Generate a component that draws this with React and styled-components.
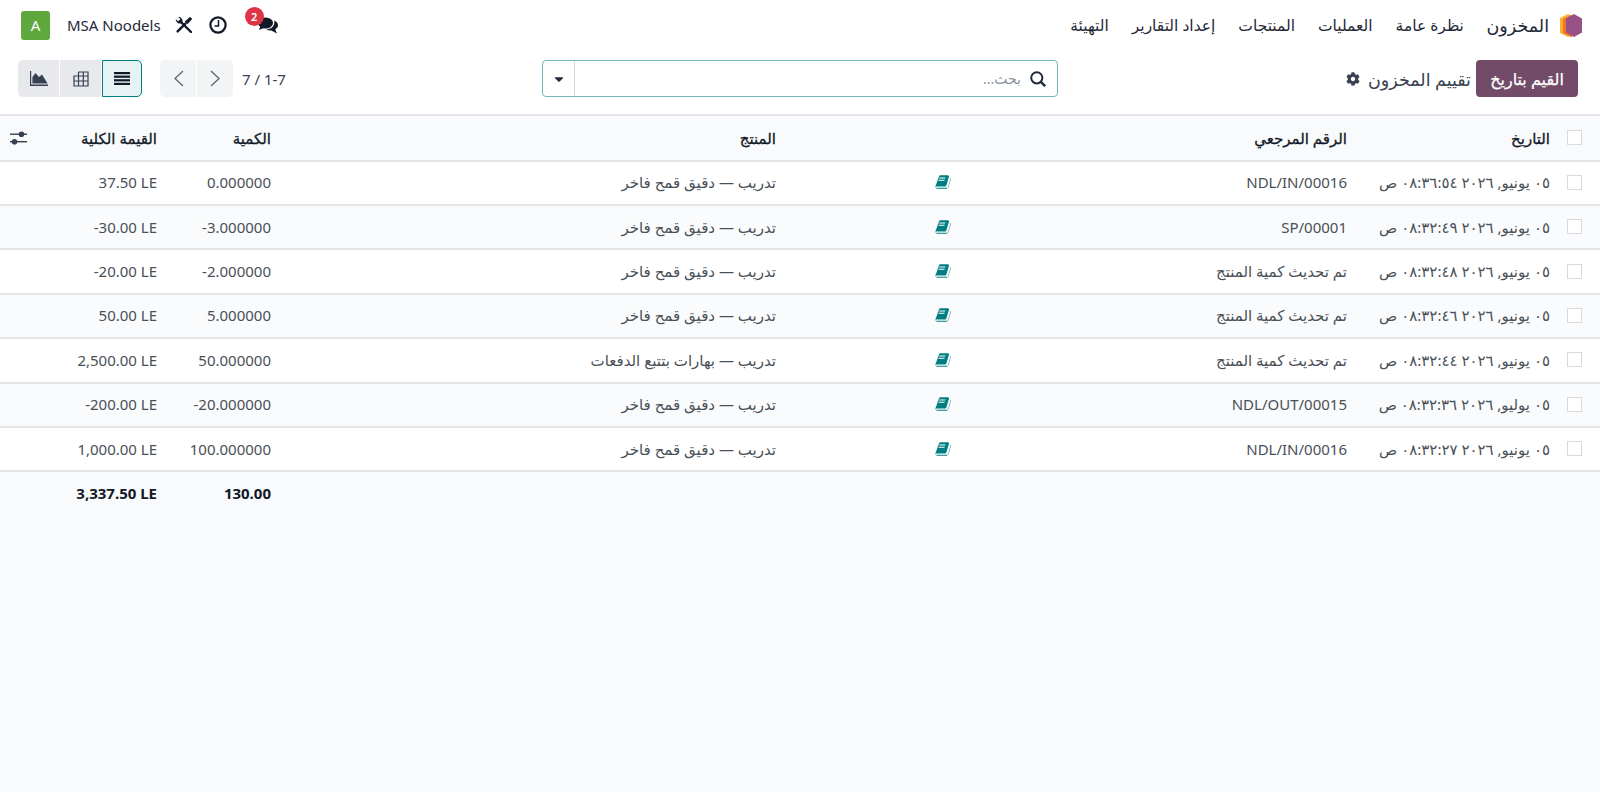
import React from 'react';
import styled, { createGlobalStyle } from 'styled-components';
import { FaCog, FaCaretDown } from 'react-icons/fa';

const Global = createGlobalStyle`
  html, body { margin: 0; padding: 0; height: 100%; background: #f9fafb; }
  #root { min-height: 792px; }
  * { box-sizing: border-box; }
`;

const Page = styled.div`
  direction: rtl;
  width: 1600px;
  height: 792px;
  overflow: hidden;
  background: #f9fafb;
  color: #374151;
  font-family: "Noto Sans", "Open Sans", "DejaVu Sans", sans-serif;
  font-size: 15px;
`;

const Top = styled.header`
  background: #fff;
  border-bottom: 2px solid #e3e5e8;
  height: 116px;
`;

const NavBar = styled.nav`
  height: 50px;
  display: flex;
  align-items: center;
  justify-content: space-between;
  padding-inline: 18px 21px;
`;

const NavGroup = styled.div`
  display: flex;
  align-items: center;
`;

const Brand = styled.span`
  font-size: 17.5px;
  color: #1f2937;
  margin-inline: 11px 11px;
`;

const MenuLink = styled.a`
  padding-inline: 11.5px;
  color: #1f2937;
  font-size: 15.5px;
`;

const SysIcon = styled.span`
  position: relative;
  display: flex;
  align-items: center;
  justify-content: ${(p) => p.$justify || 'center'};
  width: ${(p) => p.$w}px;
  margin-inline-end: ${(p) => p.$gap}px;
  color: #111827;
`;

const Badge = styled.span`
  position: absolute;
  top: -10px;
  left: 0;
  width: 19px;
  height: 19px;
  border-radius: 50%;
  background: #dc3545;
  color: #fff;
  font-size: 11px;
  font-weight: 600;
  line-height: 19px;
  text-align: center;
  direction: ltr;
`;

const Company = styled.span`
  color: #1f2937;
  font-size: 15px;
  margin-inline-end: 17px;
`;

const Avatar = styled.span`
  width: 29px;
  height: 29px;
  border-radius: 3px;
  background: #5ea83c;
  color: #fff;
  display: flex;
  align-items: center;
  justify-content: center;
  font-size: 15px;
`;

const ControlBar = styled.div`
  display: grid;
  grid-template-columns: 520px 516px 1fr;
  align-items: center;
  height: 37px;
  margin-top: 10px;
  padding-inline: 22px 18px;
`;

const Side = styled.div`
  display: flex;
  align-items: center;
`;

const EndSide = styled(Side)`
  justify-content: flex-end;
`;

const PrimaryButton = styled.button`
  height: 37px;
  width: 102px;
  padding: 0;
  border: 0;
  border-radius: 4px;
  background: #714b67;
  color: #fff;
  font: inherit;
  font-size: 16px;
  -webkit-text-stroke: 0.25px #fff;
`;

const Title = styled.span`
  font-size: 17.5px;
  color: #374151;
  margin-inline: 5px 8px;
`;

const Gear = styled.span`
  display: flex;
  font-size: 14px;
  color: #374151;
`;

const Search = styled.div`
  height: 37px;
  border: 1px solid #71b7bb;
  border-radius: 4px;
  display: flex;
  align-items: center;
  color: #1f2937;
`;

const SearchInput = styled.div`
  flex: 1;
  display: flex;
  align-items: center;
  gap: 9px;
  padding-inline-start: 11px;
`;

const Placeholder = styled.span`
  font-size: 14px;
  color: #8b929c;
`;

const CaretBox = styled.span`
  width: 32px;
  height: 100%;
  border-inline-start: 1px solid #d8dadd;
  display: flex;
  align-items: center;
  justify-content: center;
  font-size: 14px;
`;

const PagerText = styled.span`
  color: #374151;
  direction: ltr;
  margin-left: 9px;
`;

const PagerGroup = styled.div`
  display: flex;
  gap: 1px;
  height: 37px;
  border-radius: 5px;
  overflow: hidden;
  margin-inline-end: 18px;
`;

const PagerButton = styled.span`
  width: 36px;
  background: #f3f4f6;
  display: flex;
  align-items: center;
  justify-content: center;
  color: #5f6672;
`;

const ViewGroup = styled.div`
  display: flex;
  gap: 1px;
  height: 37px;
`;

const ViewButton = styled.span`
  width: ${(p) => (p.$active ? 40 : 41)}px;
  display: flex;
  align-items: center;
  justify-content: center;
  background: ${(p) => (p.$active ? '#e6f2f3' : '#e7e9ed')};
  color: ${(p) => (p.$active ? '#111827' : '#374151')};
  border: ${(p) => (p.$active ? '1px solid #017e84' : '0')};
  border-radius: ${(p) => p.$radius};
`;

const COLS = '46px 203px 371px 200px 505px 114px 125px 1fr';

const Row = styled.div`
  display: grid;
  grid-template-columns: ${COLS};
  align-items: center;
  height: ${(p) => p.$h}px;
  padding-bottom: ${(p) => p.$pb || 0}px;
  background: ${(p) => p.$bg};
  border-bottom: ${(p) => (p.$noBorder ? '0' : '2px solid #e3e5e8')};
`;

const Cell = styled.div`
  padding-inline-start: 4px;
  white-space: nowrap;
  color: #495057;
`;

const HeadCell = styled(Cell)`
  color: #111827;
  -webkit-text-stroke: 0.3px #111827;
`;

const NumberCell = styled.div`
  padding-right: 4px;
  white-space: nowrap;
  direction: ltr;
  text-align: right;
  color: ${(p) => (p.$total ? '#111827' : '#495057')};
  font-weight: ${(p) => (p.$total ? 700 : 400)};
`;

const CheckCell = styled.div`
  display: flex;
  padding-inline-start: 18px;
`;

const Check = styled.span`
  width: 15px;
  height: 15px;
  background: #fff;
  border: 1px solid #d8dadd;
  display: block;
`;

const IconCell = styled.div`
  display: flex;
  padding-inline-start: 29px;
  color: #017e84;
`;

const OptionalCell = styled.div`
  display: flex;
  justify-content: center;
  color: #374151;
`;

const data = [
  ['٠٥ يونيو, ٢٠٢٦ ٠٨:٣٦:٥٤ ص', 'NDL/IN/00016', 'تدريب — دقيق قمح فاخر', '0.000000', '37.50 LE'],
  ['٠٥ يونيو, ٢٠٢٦ ٠٨:٣٢:٤٩ ص', 'SP/00001', 'تدريب — دقيق قمح فاخر', '-3.000000', '-30.00 LE'],
  ['٠٥ يونيو, ٢٠٢٦ ٠٨:٣٢:٤٨ ص', 'تم تحديث كمية المنتج', 'تدريب — دقيق قمح فاخر', '-2.000000', '-20.00 LE'],
  ['٠٥ يونيو, ٢٠٢٦ ٠٨:٣٢:٤٦ ص', 'تم تحديث كمية المنتج', 'تدريب — دقيق قمح فاخر', '5.000000', '50.00 LE'],
  ['٠٥ يونيو, ٢٠٢٦ ٠٨:٣٢:٤٤ ص', 'تم تحديث كمية المنتج', 'تدريب — بهارات بتتبع الدفعات', '50.000000', '2,500.00 LE'],
  ['٠٥ يوليو, ٢٠٢٦ ٠٨:٣٢:٣٦ ص', 'NDL/OUT/00015', 'تدريب — دقيق قمح فاخر', '-20.000000', '-200.00 LE'],
  ['٠٥ يونيو, ٢٠٢٦ ٠٨:٣٢:٢٧ ص', 'NDL/IN/00016', 'تدريب — دقيق قمح فاخر', '100.000000', '1,000.00 LE'],
];

const Logo = () => (
  <svg width="22" height="25" viewBox="0 0 22 25">
    <path d="M8 1 L15 5 L15 20 L8 24 L0 20 L0 5 Z" fill="#fbb130" />
    <path d="M11 2 L18 6 L18 20 L11 24 L3 20 L3 6 Z" fill="#f4742b" />
    <path d="M14 1 L22 5.5 L22 19.5 L14 24 L6 19.5 L6 5.5 Z" fill="#985184" />
  </svg>
);

const ToolsIcon = () => (
  <svg width="18" height="18" viewBox="0 0 18 18" fill="none" stroke="currentColor">
    <path d="M5 5 L16 16" strokeWidth="2.4" strokeLinecap="round" />
    <path d="M1 3.6 A3.7 3.7 0 0 0 6.2 7 L7 6.2 A3.7 3.7 0 0 0 3.6 1 L5.6 3.2 L3.2 5.6 Z" fill="currentColor" strokeWidth="0.4" />
    <path d="M2.6 15.4 L10.4 7.6" strokeWidth="2.4" strokeLinecap="round" />
    <path d="M10 5.6 L15 1 L17 3 L12.4 8 Z" fill="currentColor" strokeWidth="0.4" />
  </svg>
);

const ClockIcon = () => (
  <svg width="18" height="18" viewBox="0 0 18 18" fill="none" stroke="currentColor">
    <circle cx="9" cy="9" r="7.6" strokeWidth="2.2" />
    <path d="M9.5 4 V10 H5.5" strokeWidth="1.5" />
  </svg>
);

const ChatIcon = () => (
  <svg width="20" height="17" viewBox="0 0 20 17" fill="currentColor">
    <ellipse cx="7.5" cy="6" rx="7.5" ry="5.6" />
    <path d="M2.5 9 L1 13 L7 10.5 Z" />
    <path d="M16.3 3.6 C18.6 4.7 20 6.3 20 8.2 C20 9.9 18.9 11.3 17.2 12.3 L19 16.4 L13.2 13.6 C11.4 13.6 9.6 13.1 8.2 12.4 C12.8 12.4 17 10 16.3 3.6 Z" />
  </svg>
);

const SearchIcon = () => (
  <svg width="16" height="16" viewBox="0 0 16 16" fill="none" stroke="currentColor" strokeWidth="2">
    <circle cx="6.8" cy="6.8" r="5.6" />
    <path d="M10.8 10.8 L15.2 15.2" strokeWidth="2.4" />
  </svg>
);

const BookIcon = () => (
  <svg width="16" height="16" viewBox="0 0 1792 1792" fill="currentColor">
    <path d="M1703 478q40 57 18 129l-275 906q-19 64-76.500 107.500t-122.500 43.500h-923q-77 0-148.500-53.500t-99.500-131.500q-24-67-2-127 0-4 3-27t4-37q1-8-3-21.500t-3-19.500q2-11 8-21t16.500-23.500 16.500-23.500q23-38 45-91.500t30-91.500q3-10 .5-30t-.5-28q3-11 17-28t17-23q21-36 42-92t25-90q1-9-2.500-32t.5-28q4-13 22-30.500t22-22.500q19-26 42.500-84.500t27.500-96.500q1-8-3-25.500t-2-26.500q2-8 9-18t18-23 17-21q8-12 16.500-30.500t15-35 16-36 19.500-32 26.500-23.500 36-11.500 47.500 5.500l-1 3q38-9 51-9h761q74 0 114 56t18 130l-274 906q-36 119-71.500 153.500t-128.500 34.500h-1046q-27 0-38 15-11 16-1 43 24 70 144 70h1269q29 0 56-15.500t35-41.500l300-987q7-22 5-57 38 15 59 43zm-1230 2q-4 13 2 22.500t20 9.500h608q13 0 25.500-9.500t16.500-22.500l21-64q4-13-2-22.500t-20-9.500h-608q-13 0-25.500 9.500t-16.500 22.500zm-83 256q-4 13 2 22.500t20 9.500h608q13 0 25.500-9.500t16.500-22.500l21-64q4-13-2-22.500t-20-9.500h-608q-13 0-25.500 9.500t-16.500 22.500z" />
  </svg>
);

const AreaIcon = () => (
  <svg width="18" height="15" viewBox="0 0 18 15" fill="currentColor">
    <path d="M0 0 H1.2 V13.6 H18 V15 H0 Z" />
    <path d="M2.4 12.4 V6 L5.5 2 L9 6 L12 3.6 L17.6 12.4 Z" />
  </svg>
);

const ChevronL = () => (
  <svg width="11" height="17" viewBox="0 0 11 17" fill="none" stroke="currentColor" strokeWidth="1.3">
    <path d="M10 1 L2 8.500 L10 16" />
  </svg>
);
const ChevronR = () => (
  <svg width="11" height="17" viewBox="0 0 11 17" fill="none" stroke="currentColor" strokeWidth="1.3">
    <path d="M1 1 L9 8.500 L1 16" />
  </svg>
);
const ListIcon = () => (
  <svg width="16" height="13" viewBox="0 0 16 13" fill="currentColor">
    <rect width="16" height="2.2" y="0" />
    <rect width="16" height="2.2" y="3.6" />
    <rect width="16" height="2.2" y="7.2" />
    <rect width="16" height="2.2" y="10.8" />
  </svg>
);
const PivotIcon = () => (
  <svg width="16" height="16" viewBox="0 0 16 16" fill="none" stroke="currentColor" strokeWidth="1.2">
    <path d="M5.500 1 H15 V15 H1 V5 H15 M5.500 1 V15 M10.300 1 V15 M1 10 H15" />
  </svg>
);
const SlidersIcon = () => (
  <svg width="17" height="14" viewBox="0 0 17 14" fill="currentColor">
    <rect y="2.5" width="17" height="1.4" />
    <rect y="10" width="17" height="1.4" />
    <circle cx="11.5" cy="3.2" r="2.8" />
    <circle cx="4.5" cy="10.7" r="2.8" />
  </svg>
);

export default function App() {
  return (
    <Page>
      <Global />
      <Top>
        <NavBar>
          <NavGroup>
            <Logo />
            <Brand>المخزون</Brand>
            <MenuLink>نظرة عامة</MenuLink>
            <MenuLink>العمليات</MenuLink>
            <MenuLink>المنتجات</MenuLink>
            <MenuLink>إعداد التقارير</MenuLink>
            <MenuLink>التهيئة</MenuLink>
          </NavGroup>
          <NavGroup>
            <SysIcon $w={33} $gap={18} $justify="flex-start">
              <ChatIcon />
              <Badge>2</Badge>
            </SysIcon>
            <SysIcon $w={18} $gap={16}><ClockIcon /></SysIcon>
            <SysIcon $w={18} $gap={14}><ToolsIcon /></SysIcon>
            <Company>MSA Noodels</Company>
            <Avatar>A</Avatar>
          </NavGroup>
        </NavBar>
        <ControlBar>
          <Side>
            <PrimaryButton>القيم بتاريخ</PrimaryButton>
            <Title>تقييم المخزون</Title>
            <Gear><FaCog /></Gear>
          </Side>
          <Search>
            <SearchInput>
              <SearchIcon />
              <Placeholder>بحث...</Placeholder>
            </SearchInput>
            <CaretBox><FaCaretDown /></CaretBox>
          </Search>
          <EndSide>
            <PagerText>7 / 1-7</PagerText>
            <PagerGroup>
              <PagerButton><ChevronR /></PagerButton>
              <PagerButton><ChevronL /></PagerButton>
            </PagerGroup>
            <ViewGroup>
              <ViewButton $active $radius="0 5px 5px 0"><ListIcon /></ViewButton>
              <ViewButton><PivotIcon /></ViewButton>
              <ViewButton $radius="5px 0 0 5px"><AreaIcon /></ViewButton>
            </ViewGroup>
          </EndSide>
        </ControlBar>
      </Top>
      <Row $h={45.6} $bg="#f9fafb">
        <CheckCell><Check /></CheckCell>
        <HeadCell>التاريخ</HeadCell>
        <HeadCell>الرقم المرجعي</HeadCell>
        <Cell />
        <HeadCell>المنتج</HeadCell>
        <HeadCell>الكمية</HeadCell>
        <HeadCell>القيمة الكلية</HeadCell>
        <OptionalCell><SlidersIcon /></OptionalCell>
      </Row>
      {data.map((r, i) => (
        <Row key={i} $h={44.4} $pb={1} $bg={i % 2 ? '#fafbfc' : '#ffffff'}>
          <CheckCell><Check /></CheckCell>
          <Cell>{r[0]}</Cell>
          <Cell>{r[1]}</Cell>
          <IconCell><BookIcon /></IconCell>
          <Cell>{r[2]}</Cell>
          <NumberCell>{r[3]}</NumberCell>
          <NumberCell>{r[4]}</NumberCell>
          <span />
        </Row>
      ))}
      <Row $h={42} $bg="transparent" $noBorder>
        <span />
        <Cell />
        <Cell />
        <Cell />
        <Cell />
        <NumberCell $total>130.00</NumberCell>
        <NumberCell $total>3,337.50 LE</NumberCell>
        <span />
      </Row>
    </Page>
  );
}
